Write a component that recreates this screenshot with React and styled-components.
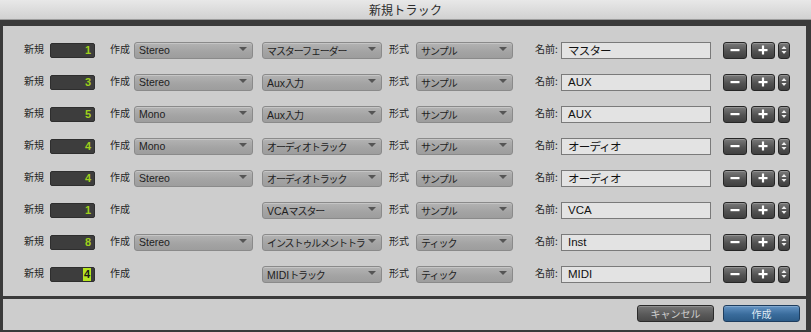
import React from "react";
import styled, { createGlobalStyle } from "styled-components";

const Global = createGlobalStyle`
  html, body { margin: 0; padding: 0; background: #3a3a3a; }
  body { width: 811px; height: 332px; overflow: hidden; font-family: "Liberation Sans", "Noto Sans CJK JP", sans-serif; }
`;

const Window = styled.div`
  width: 811px;
  height: 332px;
  display: flex;
  flex-direction: column;
  background: #3a3a3a;
`;

const TitleBar = styled.div`
  height: 20px;
  flex: none;
  display: flex;
  align-items: center;
  justify-content: center;
  background: linear-gradient(#e8e8e8, #d1d1d1);
  border-bottom: 1px solid #9c9c9c;
  box-sizing: border-box;
  font-family: "Noto Sans CJK JP", sans-serif;
  font-size: 12px;
  color: #2c2c2c;
  letter-spacing: 0.2px;
`;

const Body = styled.div`
  flex: 1;
  display: flex;
  flex-direction: column;
  gap: 3px;
  padding: 6px 5px 2px 3px;
  box-sizing: border-box;
`;

const Panel = styled.div`
  background: #cdcdcd;
  padding: 8px 0 6px;
  height: 270px;
  box-sizing: border-box;
  display: flex;
  flex-direction: column;
`;

const Row = styled.div`
  height: 32px;
  display: flex;
  align-items: center;
  padding-left: 21px;
`;

const Label = styled.span`
  flex: none;
  width: ${(p) => p.$w}px;
  margin-left: ${(p) => p.$ml || 0}px;
  font-family: "Noto Sans CJK JP", sans-serif;
  font-size: 10px;
  color: #262626;
  white-space: nowrap;
  line-height: 12px;
  margin-top: -2px;
`;

const NumBox = styled.div`
  flex: none;
  width: 45px;
  height: 15px;
  box-sizing: border-box;
  background: #3d3d3d;
  border: 1px solid #2e2e2e;
  border-radius: 2px;
  display: flex;
  align-items: center;
  justify-content: flex-end;
  padding-right: 3px;
  font-family: "Liberation Sans", sans-serif;
  font-weight: bold;
  font-size: 11px;
  color: #9fd01c;
`;

const Sel = styled.span`
  background: #b6e51f;
  color: #1a1a1a;
  padding: 0 1px;
  line-height: 13px;
`;

const Select = styled.div`
  flex: none;
  position: relative;
  width: ${(p) => p.$w}px;
  margin-left: ${(p) => p.$ml || 0}px;
  height: 17px;
  box-sizing: border-box;
  border: 1px solid #8a8a8a;
  border-radius: 3px;
  background: linear-gradient(#b3b3b3, #a3a3a3 60%, #9d9d9d);
  box-shadow: inset 0 1px 0 rgba(255,255,255,0.25);
  display: flex;
  align-items: center;
  padding-left: 4px;
  font-family: "Liberation Sans", "Noto Sans CJK JP", sans-serif;
  font-size: 10.5px;
  color: #1e1e1e;
  white-space: nowrap;
  visibility: ${(p) => (p.$hidden ? "hidden" : "visible")};
  &::after {
    content: "";
    position: absolute;
    right: 5px;
    top: 4px;
    border-left: 4px solid transparent;
    border-right: 4px solid transparent;
    border-top: 4px solid #555;
  }
`;

const SelText = styled.span`
  display: block;
  width: calc(100% - 12px);
  overflow: hidden;
  white-space: nowrap;
`;

const Kana = styled.span`
  font-size: 10px;
  letter-spacing: ${(p) => p.$ls}px;
`;

const NameInput = styled.div`
  flex: none;
  width: 150px;
  height: 17px;
  box-sizing: border-box;
  border: 1px solid #7a7a7a;
  background: #e3e3e3;
  display: flex;
  align-items: center;
  padding-left: 6px;
  font-family: "Liberation Sans", "Noto Sans CJK JP", sans-serif;
  font-size: 11.5px;
  color: #111;
`;

const NameKana = styled.span`
  letter-spacing: -0.8px;
`;

const DarkBtn = styled.div`
  flex: none;
  width: ${(p) => p.$w}px;
  margin-left: ${(p) => p.$ml}px;
  height: 17px;
  box-sizing: border-box;
  border: 1px solid #262626;
  border-radius: 3px;
  background: linear-gradient(#7a7a7a, #525252 55%, #3f3f3f);
  box-shadow: inset 0 1px 0 rgba(255,255,255,0.2);
  display: flex;
  align-items: center;
  justify-content: center;
`;

const Footer = styled.div`
  flex: 1;
  background: #cdcdcd;
  display: flex;
  align-items: center;
  justify-content: flex-end;
  gap: 9px;
  padding-right: 6px;
`;

const FooterBtn = styled.div`
  width: 77px;
  height: 17px;
  box-sizing: border-box;
  border-radius: 3px;
  border: 1px solid ${(p) => (p.$primary ? "#1e3d5e" : "#2b2b2b")};
  background: ${(p) =>
    p.$primary
      ? "linear-gradient(#6494c4, #3a6c9c 55%, #2c5b88)"
      : "linear-gradient(#767676, #5a5a5a 55%, #4a4a4a)"};
  box-shadow: inset 0 1px 0 rgba(255,255,255,0.2);
  display: flex;
  align-items: center;
  justify-content: center;
  font-family: "Noto Sans CJK JP", sans-serif;
  font-size: 10px;
  color: ${(p) => (p.$primary ? "#dfe8f2" : "#cfcfcf")};
  margin-top: -2px;
`;

const Minus = () => (
  <svg width="10" height="10" viewBox="0 0 10 10">
    <rect x="0.5" y="4" width="9" height="2.2" fill="#fff" />
  </svg>
);
const Plus = () => (
  <svg width="10" height="10" viewBox="0 0 10 10">
    <rect x="0.5" y="4" width="9" height="2.2" fill="#fff" />
    <rect x="3.9" y="0.5" width="2.2" height="9" fill="#fff" />
  </svg>
);
const Updown = () => (
  <svg width="6" height="10" viewBox="0 0 6 10">
    <path d="M0.5 4 L3 1 L5.5 4 Z" fill="#eee" />
    <path d="M0.5 6 L3 9 L5.5 6 Z" fill="#eee" />
  </svg>
);

const CJK = /([\u3040-\u30ff\u4e00-\u9fff]+)/;

function splitRuns(text, Wrap, props) {
  return text.split(CJK).map((part, i) =>
    CJK.test(part) ? (
      <Wrap key={i} {...props}>{part}</Wrap>
    ) : (
      part
    )
  );
}

const rows = [
  { n: "1", ch: "Stereo", type: "マスターフェーダー", fmt: "サンプル", name: "マスター" },
  { n: "3", ch: "Stereo", type: "Aux入力", fmt: "サンプル", name: "AUX" },
  { n: "5", ch: "Mono", type: "Aux入力", fmt: "サンプル", name: "AUX" },
  { n: "4", ch: "Mono", type: "オーディオトラック", fmt: "サンプル", name: "オーディオ" },
  { n: "4", ch: "Stereo", type: "オーディオトラック", fmt: "サンプル", name: "オーディオ" },
  { n: "1", ch: null, type: "VCAマスター", fmt: "サンプル", name: "VCA" },
  { n: "8", ch: "Stereo", type: "インストゥルメントトラ", fmt: "ティック", name: "Inst" },
  { n: "4", ch: null, type: "MIDIトラック", fmt: "ティック", name: "MIDI", sel: true },
];

export default function App() {
  return (
    <>
      <Global />
      <Window>
        <TitleBar>新規トラック</TitleBar>
        <Body>
          <Panel>
            {rows.map((r, i) => (
              <Row key={i}>
                <Label $w={26}>新規</Label>
                <NumBox>{r.sel ? <Sel>{r.n}</Sel> : r.n}</NumBox>
                <Label $w={24} $ml={15}>作成</Label>
                <Select $w={119} $hidden={!r.ch}>
                  <SelText>{r.ch || ""}</SelText>
                </Select>
                <Select $w={120} $ml={9}>
                  <SelText>{splitRuns(r.type, Kana, { $ls: -1.1 })}</SelText>
                </Select>
                <Label $w={27} $ml={7}>形式</Label>
                <Select $w={97}>
                  <SelText>{splitRuns(r.fmt, Kana, { $ls: -1 })}</SelText>
                </Select>
                <Label $w={26} $ml={22}>名前:</Label>
                <NameInput>{splitRuns(r.name, NameKana, {})}</NameInput>
                <DarkBtn $w={24} $ml={12}><Minus /></DarkBtn>
                <DarkBtn $w={24} $ml={4}><Plus /></DarkBtn>
                <DarkBtn $w={12} $ml={3}><Updown /></DarkBtn>
              </Row>
            ))}
          </Panel>
          <Footer>
            <FooterBtn>キャンセル</FooterBtn>
            <FooterBtn $primary>作成</FooterBtn>
          </Footer>
        </Body>
      </Window>
    </>
  );
}
